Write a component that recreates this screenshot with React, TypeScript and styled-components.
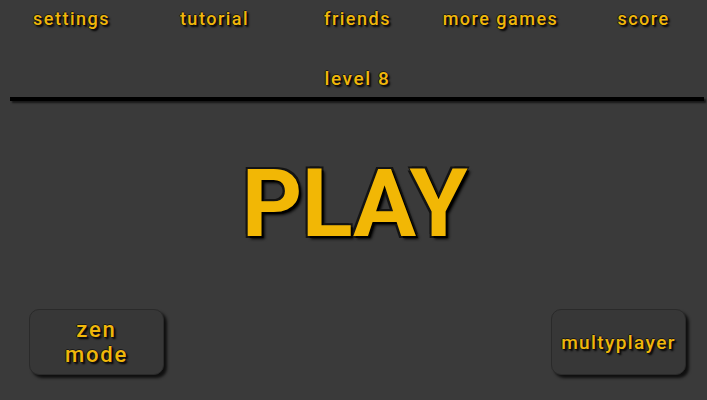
import React from 'react'
import styled, { createGlobalStyle } from 'styled-components'

const GlobalStyle = createGlobalStyle`
  html, body {
    margin: 0;
    padding: 0;
    background: #3a3a3a;
  }
`

const menuItems = ['settings', 'tutorial', 'friends', 'more games', 'score']

export default function App() {
  return (
    <>
      <GlobalStyle />
      <Screen>
        <TopMenu>
          {menuItems.map((item) => (
            <MenuItem key={item}>{item}</MenuItem>
          ))}
        </TopMenu>
        <LevelLabel>level 8</LevelLabel>
        <Divider />
        <PlayArea>
          <PlayText>PLAY</PlayText>
        </PlayArea>
        <BottomBar>
          <ModeButton>
            zen
            <br />
            mode
          </ModeButton>
          <ModeButton $small>multyplayer</ModeButton>
        </BottomBar>
      </Screen>
    </>
  )
}

const Screen = styled.div`
  width: 707px;
  height: 400px;
  background: #3a3a3a;
  display: flex;
  flex-direction: column;
  font-family: 'Roboto', 'DejaVu Sans', sans-serif;
  overflow: hidden;
`

const yellowText = `
  color: #f0b70a;
  text-shadow:
    1px 1px 0 #111,
    -1px 0 0 #1a1a1a,
    0 -1px 0 #1a1a1a,
    2px 2px 2px #000;
`

const TopMenu = styled.div`
  display: grid;
  grid-template-columns: repeat(5, 143px);
  padding-top: 8px;
  height: 24px;
`

const MenuItem = styled.div`
  ${yellowText}
  text-align: center;
  white-space: nowrap;
  font-size: 18px;
  font-weight: 500;
  letter-spacing: 1.5px;
  line-height: 22px;
`

const LevelLabel = styled.div`
  ${yellowText}
  text-align: center;
  font-size: 19px;
  font-weight: 500;
  letter-spacing: 1.6px;
  line-height: 22px;
  margin-top: 36px;
  padding-left: 8px;
`

const Divider = styled.div`
  height: 4px;
  background: #000;
  margin: 7px 3px 2px 10px;
  box-shadow: 2px 2px 2px rgba(0, 0, 0, 0.6);
`

const PlayArea = styled.div`
  flex: 1;
  display: flex;
  align-items: center;
  justify-content: center;
  padding-bottom: 4px;
`

const PlayText = styled.div`
  color: #f2b705;
  font-size: 94px;
  font-weight: 700;
  letter-spacing: -0.5px;
  line-height: 1;
  padding: 0 0 0 2px;
  text-shadow:
    2px 2px 0 #000,
    -2px -2px 0 #141414,
    2px -2px 0 #141414,
    -2px 2px 0 #141414,
    3px 3px 3px #000;
`

const BottomBar = styled.div`
  display: flex;
  justify-content: space-between;
  align-items: flex-end;
  padding: 0 21px 25px 29px;
`

const ModeButton = styled.div<{ $small?: boolean }>`
  ${yellowText}
  width: 135px;
  height: 66px;
  box-sizing: border-box;
  display: flex;
  align-items: center;
  justify-content: center;
  text-align: center;
  font-size: ${(p) => (p.$small ? '19px' : '22px')};
  font-weight: 500;
  letter-spacing: ${(p) => (p.$small ? '1.4px' : '1.8px')};
  line-height: 25px;
  background: #373737;
  border: 1px solid #2a2a2a;
  border-radius: 10px;
  box-shadow: 3px 3px 3px rgba(0, 0, 0, 0.75);
`
